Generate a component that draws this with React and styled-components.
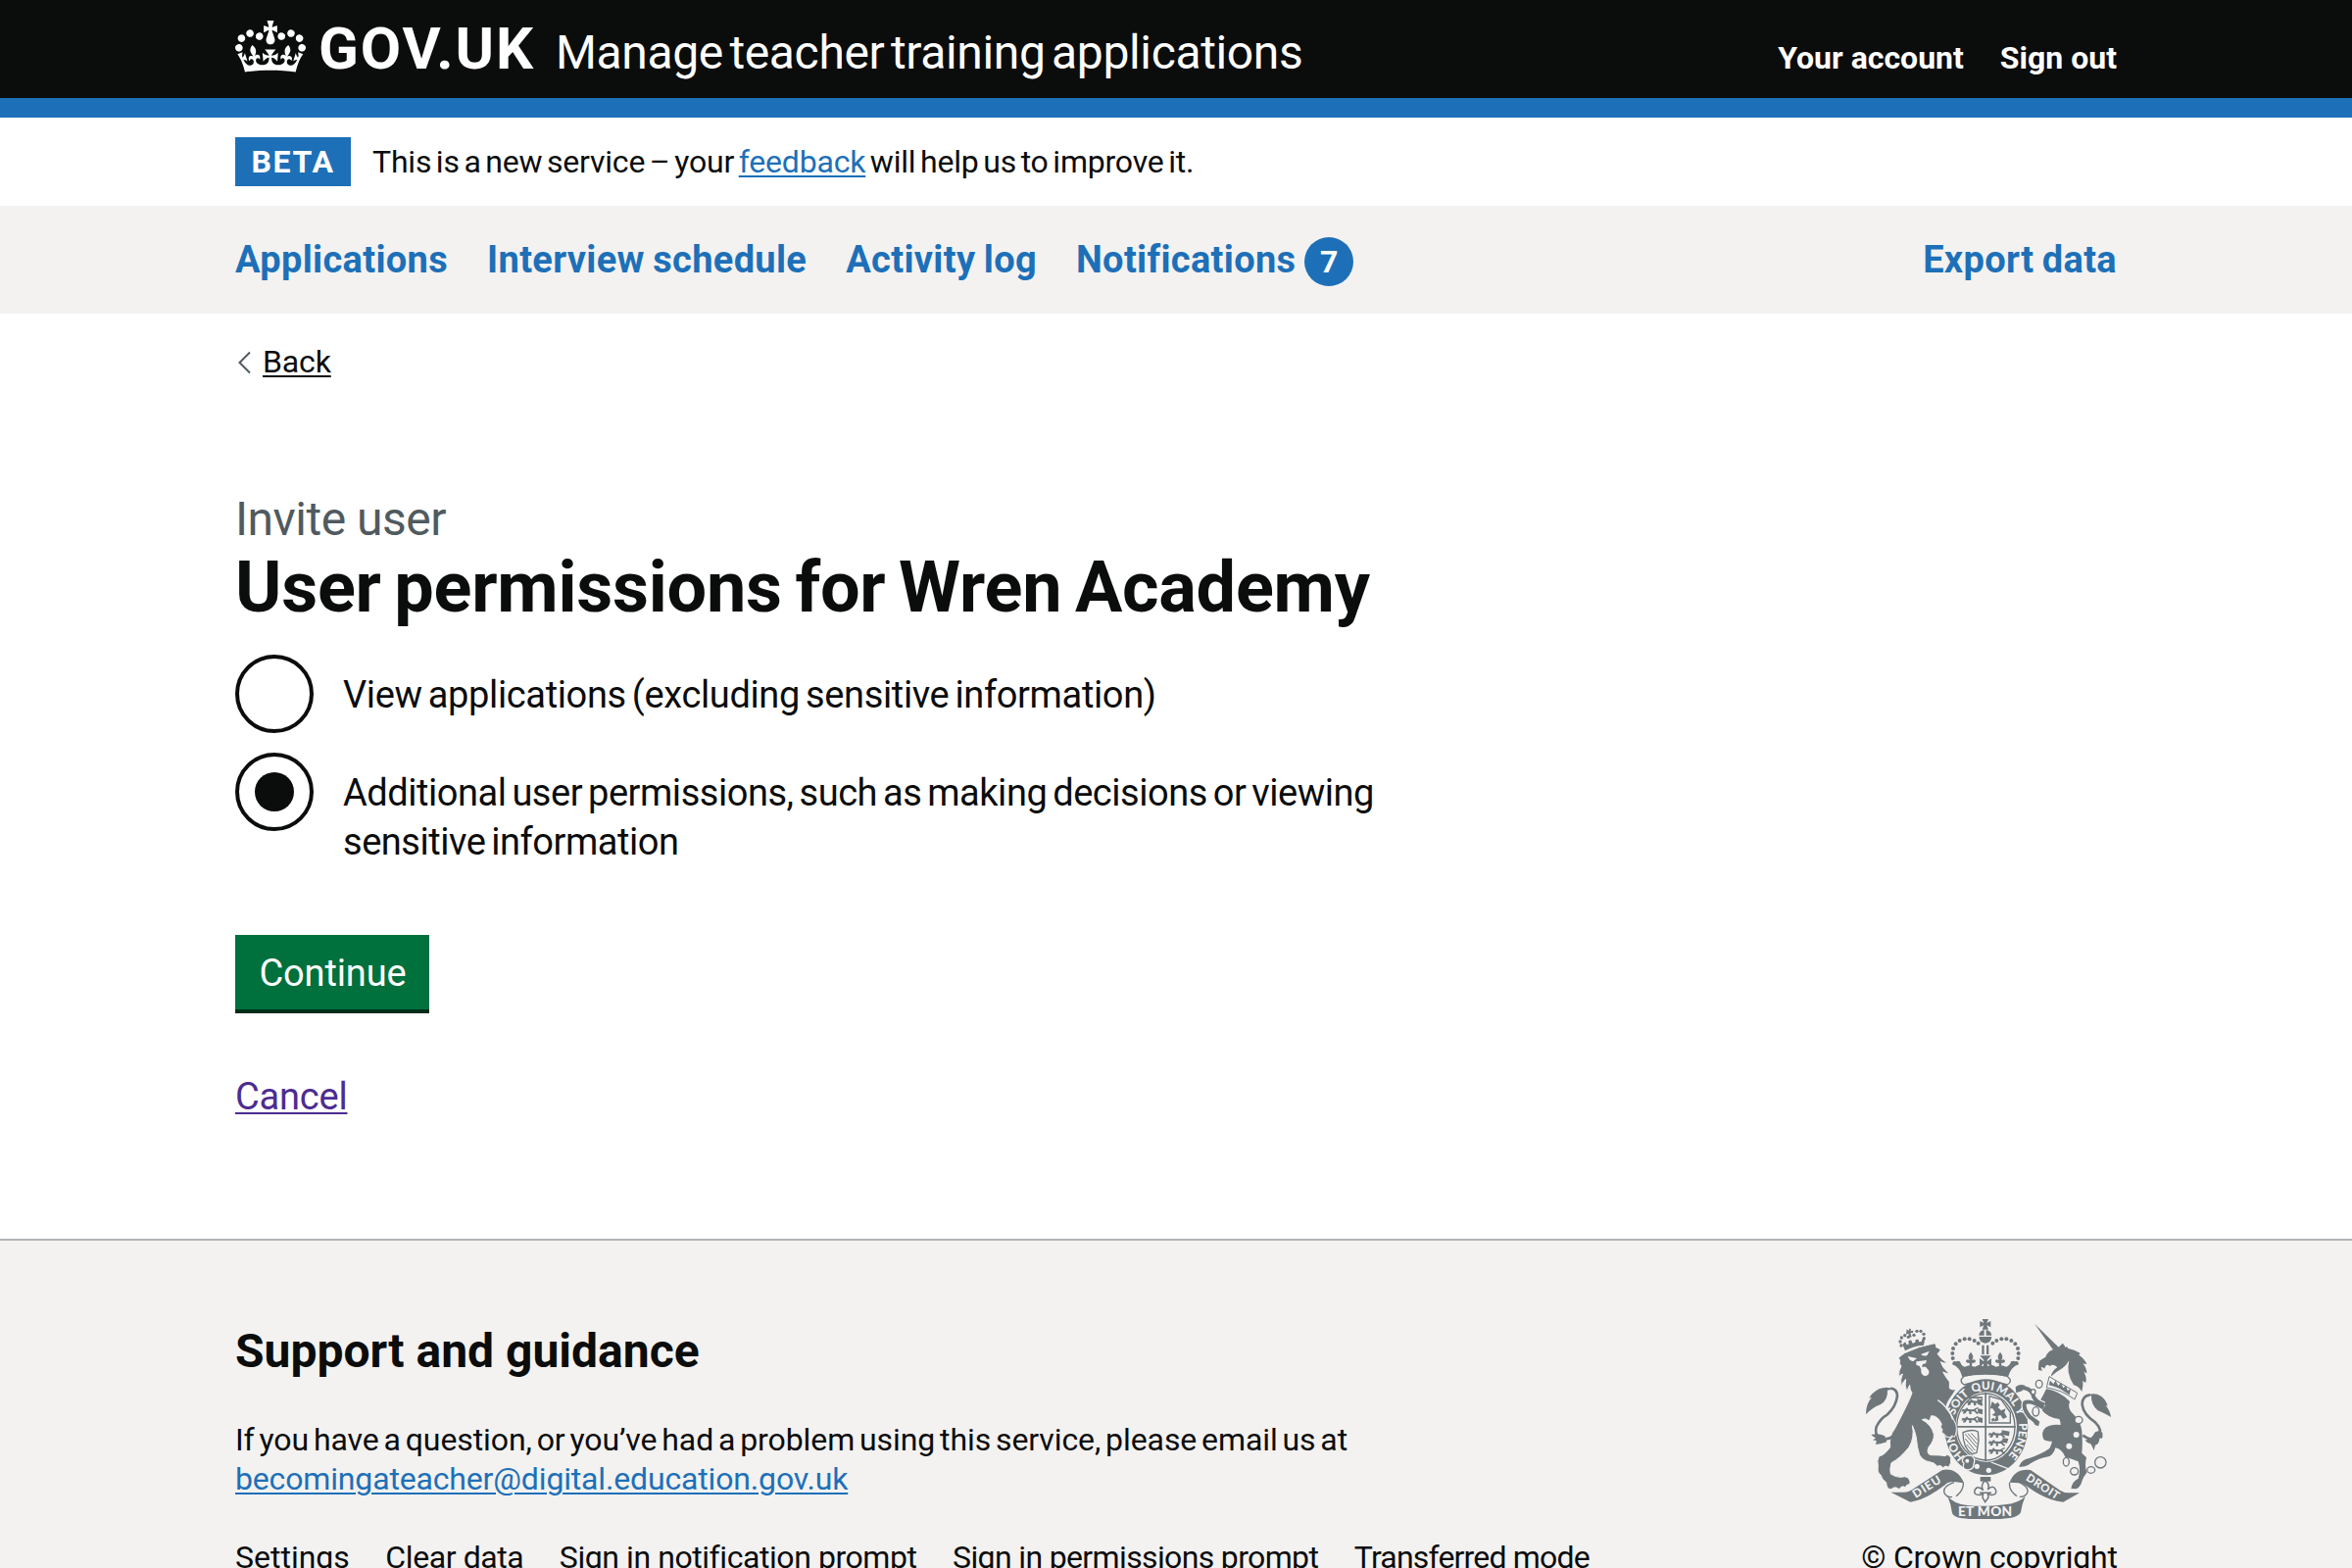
import React, { useState } from 'react';
import styled, { createGlobalStyle, ThemeProvider } from 'styled-components';

const theme = {
  ink: '#0b0c0c',
  blue: '#1d70b8',
  grey: '#f3f2f1',
  border: '#b1b4b6',
  secondary: '#505a5f',
  visited: '#4c2c92',
  green: '#00703c',
  greenShade: '#002d18',
  crest: '#6f777b',
};

const GlobalStyle = createGlobalStyle`
  html, body { margin: 0; padding: 0; background: #fff; }
  body {
    font-family: Roboto, "Liberation Sans", sans-serif;
    color: ${theme.ink};
    overflow: hidden;
  }
`;

const Page = styled.div`
  height: 1600px;
  overflow: hidden;
`;

const Container = styled.div`
  width: 1920px;
  margin: 0 auto;
`;

const Text = styled.span`
  letter-spacing: ${(p) => p.$track || 0}px;
`;

/* Header */

const Header = styled.header`
  height: 100px;
  background: ${(p) => p.theme.ink};
  color: #fff;
  border-bottom: 20px solid ${(p) => p.theme.blue};
`;

const HeaderRow = styled(Container)`
  display: flex;
  align-items: flex-start;
`;

const CrownIcon = styled.svg`
  display: block;
  width: 72px;
  height: 53px;
  margin: 21px 13px 0 0;
  fill: #fff;
`;

const Logotype = styled.span`
  width: 242px;
  margin-top: 20px;
  font-size: 60px;
  line-height: 60px;
  font-weight: 700;
  letter-spacing: 1.92px;
  white-space: nowrap;
`;

const ServiceName = styled.span`
  margin-top: 24px;
  font-size: 48px;
  line-height: 60px;
  letter-spacing: -0.36px;
  word-spacing: -5px;
  white-space: nowrap;
`;

const AccountNav = styled.nav`
  display: flex;
  gap: 37px;
  margin: 39px 0 0 auto;
  font-size: 32px;
  line-height: 40px;
  font-weight: 700;
`;

/* Phase banner */

const PhaseBanner = styled(Container)`
  display: flex;
  align-items: center;
  gap: 22px;
  height: 90px;
  font-size: 32px;
  line-height: 40px;
`;

const PhaseTag = styled.strong`
  box-sizing: border-box;
  width: 118px;
  height: 50px;
  background: ${(p) => p.theme.blue};
  color: #fff;
  line-height: 50px;
  letter-spacing: 1.7px;
  text-align: center;
`;

const BannerText = styled.span`
  letter-spacing: -0.2px;
  word-spacing: -3.1px;
`;

const Link = styled.a`
  color: ${(p) => p.theme[p.$tone || 'blue']};
  text-decoration: underline;
  text-decoration-thickness: 2px;
  text-underline-offset: 3px;
`;

/* Primary navigation */

const NavBar = styled.nav`
  height: 110px;
  background: ${(p) => p.theme.grey};
`;

const NavRow = styled(Container)`
  display: flex;
  gap: 40px;
  padding-top: 30px;
`;

const NavItem = styled.a`
  display: flex;
  color: ${(p) => p.theme.blue};
  font-size: 38px;
  line-height: 50px;
  font-weight: 700;
  letter-spacing: 0.33px;
  word-spacing: -1.4px;
  white-space: nowrap;
  margin-left: ${(p) => (p.$end ? 'auto' : 0)};
`;

const Badge = styled.span`
  width: 50px;
  height: 50px;
  margin: 2px 0 0 9px;
  border-radius: 50%;
  background: ${(p) => p.theme.blue};
  color: #fff;
  font-size: 32px;
  text-align: center;
`;

/* Main */

const Main = styled(Container)`
  height: 944px;
`;

const BackLink = styled.div`
  display: flex;
  align-items: center;
  padding: 29px 0 111px 3px;
  font-size: 32px;
  line-height: 40px;
  letter-spacing: -0.15px;
`;

const Chevron = styled.svg`
  width: 13px;
  height: 24px;
  margin: 1px 12px 0 0;
  fill: none;
  stroke: ${(p) => p.theme.secondary};
  stroke-width: 2;
`;

const Caption = styled.span`
  display: block;
  color: ${(p) => p.theme.secondary};
  font-size: 48px;
  line-height: 60px;
  letter-spacing: -0.5px;
`;

const Title = styled.h1`
  margin: 0 0 28px;
  font-size: 72px;
  line-height: 80px;
  font-weight: 700;
  letter-spacing: -0.25px;
  word-spacing: -4px;
`;

const RadioGroup = styled.div`
  display: flex;
  flex-direction: column;
  gap: 20px;
  width: 1190px;
`;

const RadioRow = styled.label`
  display: flex;
  gap: 30px;
  min-height: 80px;
`;

const RadioInput = styled.input`
  appearance: none;
  flex: none;
  display: grid;
  place-items: center;
  box-sizing: border-box;
  width: 80px;
  height: 80px;
  margin: 0;
  border: 4px solid ${(p) => p.theme.ink};
  border-radius: 50%;

  &:checked::after {
    content: '';
    width: 40px;
    height: 40px;
    border-radius: 50%;
    background: ${(p) => p.theme.ink};
  }
`;

const RadioLabel = styled.span`
  padding-top: 16px;
  font-size: 38px;
  line-height: 50px;
  letter-spacing: ${(p) => p.$track}px;
  word-spacing: -3px;
`;

const Button = styled.button`
  display: block;
  width: 198px;
  height: 76px;
  margin: 70px 0 64px;
  padding: 0 0 0 1px;
  border: 0;
  background: ${(p) => p.theme.green};
  box-shadow: 0 4px 0 ${(p) => p.theme.greenShade};
  color: #fff;
  font: inherit;
  font-size: 38px;
  line-height: 78px;
  letter-spacing: -0.14px;
`;

const CancelRow = styled.div`
  font-size: 38px;
  line-height: 50px;
  letter-spacing: -0.2px;
`;

/* Footer */

const Footer = styled.footer`
  height: 400px;
  border-top: 2px solid ${(p) => p.theme.border};
  background: ${(p) => p.theme.grey};
`;

const FooterRow = styled(Container)`
  display: flex;
  justify-content: space-between;
`;

const FooterMain = styled.div`
  padding-top: 83px;
  font-size: 32px;
  line-height: 40px;
`;

const FooterTitle = styled.h2`
  margin: 0 0 40px;
  font-size: 48px;
  line-height: 60px;
  font-weight: 700;
`;

const FooterText = styled.p`
  margin: 0 0 40px;
  letter-spacing: -0.08px;
  word-spacing: -3px;
`;

const FooterLinks = styled.div`
  display: flex;
  gap: 36.5px;
  white-space: nowrap;
`;

const FooterMeta = styled.div`
  display: flex;
  flex-direction: column;
  align-items: center;
  width: 260px;
  padding-top: 80px;
  font-size: 32px;
  line-height: 40px;
  letter-spacing: -0.2px;
  white-space: nowrap;
`;

const CrestSvg = styled.svg`
  display: block;
  width: 250px;
  height: 204px;
  margin: 0 2px 19px 0;
  color: ${(p) => p.theme.crest};
`;

const Crown = () => (
  <CrownIcon viewBox="0 0 132 97" aria-hidden="true">
    <path
      fillRule="evenodd"
      d="M25 30.2c3.5 1.5 7.7-.2 9.1-3.7 1.5-3.6-.2-7.8-3.9-9.2-3.6-1.4-7.6.3-9.1 3.9-1.4 3.5.3 7.5 3.9 9zM9 39.5c3.6 1.5 7.8-.2 9.2-3.7 1.5-3.6-.2-7.8-3.9-9.1-3.6-1.5-7.6.2-9.1 3.8-1.4 3.5.3 7.5 3.8 9zM4.4 57.2c3.5 1.5 7.7-.2 9.1-3.8 1.5-3.6-.2-7.7-3.9-9.1-3.5-1.5-7.6.3-9.1 3.8-1.4 3.5.3 7.6 3.9 9.1zm38.3-21.4c3.5 1.5 7.7-.2 9.1-3.8 1.5-3.6-.2-7.7-3.9-9.1-3.6-1.5-7.6.3-9.1 3.8-1.3 3.6.4 7.7 3.9 9.1zm64.4-5.6c-3.6 1.5-7.8-.2-9.1-3.7-1.5-3.6.2-7.8 3.8-9.2 3.6-1.4 7.7.3 9.2 3.9 1.3 3.5-.4 7.5-3.9 9zm15.9 9.3c-3.6 1.5-7.7-.2-9.1-3.7-1.5-3.6.2-7.8 3.7-9.1 3.6-1.5 7.7.2 9.2 3.8 1.5 3.5-.3 7.5-3.8 9zm4.7 17.7c-3.6 1.5-7.8-.2-9.2-3.8-1.5-3.6.2-7.7 3.9-9.1 3.6-1.5 7.7.3 9.2 3.8 1.3 3.5-.4 7.6-3.9 9.1zM89.3 35.8c-3.6 1.5-7.8-.2-9.2-3.8-1.4-3.6.2-7.7 3.9-9.1 3.6-1.5 7.7.3 9.2 3.8 1.4 3.6-.3 7.7-3.9 9.1zM69.7 17.7l8.9 4.7V9.3l-8.9 2.8c-.2-.3-.5-.6-.9-.9L72.4 0H59.6l3.5 11.2c-.3.3-.6.5-.9.9l-8.8-2.8v13.1l8.8-4.7c.3.3.6.7.9.9l-5 15.4v.1c-.2.8-.4 1.6-.4 2.4 0 4.1 3.1 7.5 7 8.1h.2c.3 0 .7.1 1 .1.4 0 .7 0 1-.1h.2c4-.6 7.1-4.1 7.1-8.1 0-.8-.1-1.7-.4-2.4V34l-5.1-15.4c.4-.2.7-.6 1-.9zM66 92.8c16.9 0 32.8 1.1 47.1 3.2 4-16.9 8.9-26.7 14-33.5l-9.6-3.4c1 4.9 1.1 7.2 0 10.2-1.5-1.4-3-4.3-4.2-8.7L108.6 76c2.8-2 5-3.2 7.5-3.3-4.4 9.4-10 11.9-13.6 11.2-4.3-.8-6.3-4.6-5.6-7.9 1-4.7 5.7-5.9 8-.5 4.3-8.7-3-11.4-7.6-8.8 7.1-7.2 7.9-13.5 2.1-21.1-8 6.1-8.1 12.3-4.5 20.8-4.7-5.4-12.1-2.5-9.5 6.2 3.4-5.2 7.9-2 7.2 3.1-.6 4.3-6.4 7.8-13.5 7.2-10.3-.9-10.9-8-11.2-13.8 2.5-.5 7.1 1.8 11 7.3L80.2 60c-4.1 4.4-8 5.3-12.3 5.4 1.4-4.4 8-11.6 8-11.6H55.5s6.4 7.2 7.9 11.6c-4.2-.1-8-1-12.3-5.4l1.4 16.4c3.9-5.5 8.5-7.7 10.9-7.3-.3 5.8-.9 12.8-11.1 13.8-7.2.6-12.9-2.9-13.5-7.2-.7-5 3.8-8.3 7.1-3.1 2.7-8.7-4.6-11.6-9.4-6.2 3.7-8.5 3.6-14.7-4.6-20.8-5.8 7.6-5 13.9 2.2 21.1-4.7-2.6-11.9.1-7.7 8.8 2.3-5.5 7.1-4.2 8.1.5.7 3.3-1.3 7.1-5.7 7.9-3.5.7-9-1.8-13.5-11.2 2.5.1 4.7 1.3 7.5 3.3l-4.7-15.4c-1.2 4.4-2.7 7.2-4.3 8.7-1.1-3-.9-5.3 0-10.2l-9.5 3.4c5 6.9 9.9 16.7 14 33.5 14.8-2.1 30.8-3.2 47.7-3.2z"
    />
  </CrownIcon>
);

const crownPearls = [
  [343, 213], [338, 198], [337, 183], [339, 168], [347, 154], [359, 144], [374, 139], [389, 139], [404, 144],
];

const lionPearls = [
  [180, 159], [177, 147], [181, 135], [191, 128], [219, 127], [228, 115], [240, 115], [249, 124], [250, 137], [202, 133],
];

const chainLinks = [
  [602, 277, 10, 12], [584, 301, 7, 8], [592, 361, 10, 14], [723, 387, 12, 11],
  [685, 515, 9, 13], [710, 544, 12, 11], [761, 540, 12, 10], [790, 517, 17, 17],
];

const motto = [
  ['HON', 112], ['SOIT', 247], ['QUI', 331], ['MAL', 407], ['Y', 464], ['PENSE', 552],
];

const Passant = ({ x, y }) => (
  <path
    transform={`translate(${x} ${y})`}
    d="M0 14l4-9 7 2 6-6 5 5 14 1 9-5 7-3-1 5-7 3 3 6 6 5-6 3-7-8-10 0 2 7-8 1 0-8-7-2-4 8-8 1 2-8z"
  />
);

const CrownFleur = ({ x }) => (
  <path
    transform={`translate(${x} 196)`}
    d="M0-17q13 15 3 25 10-6 12 2 0 8-11 6l-1 12h-6l-1-12q-11 2-11-6 2-8 12-2-10-10 3-25z"
  />
);

const Crest = () => (
  <CrestSvg viewBox="72 78 750 612" role="img" aria-label="Royal coat of arms">
    <defs>
      <path id="garter" d="M440 526A101 116 0 0 1 440 294A101 116 0 0 1 440 526" />
    </defs>
    <g fill="currentColor">
      {/* royal crown */}
      <path d="M428 78h19l-5 12 12-6v19l-12-6 5 13h-19l5-13-12 6V84l12 6z" />
      <path d="M418 128q0-13 16-17v17zM440 111q16 4 17 17h-17zM418 132h39q-2 19-19 20-18-1-20-20z" />
      <path d="M427 158h7v28h-7zM441 158h7v28h-7z" />
      {crownPearls.map(([x, y]) => (
        <g key={`${x}-${y}`}>
          <circle cx={x} cy={y} r="6" />
          <circle cx={876 - x} cy={y} r="6" />
        </g>
      ))}
      <circle cx="416" cy="152" r="6" />
      <circle cx="460" cy="152" r="6" />
      <CrownFleur x={393} />
      <CrownFleur x={483} />
      <path d="M421 190h34l-12 13v5l13-10v26l-13-10 3 14h-16l3-14-13 10v-26l13 10v-5z" />
      <path d="M336 216q14-14 24-8 4 14 14 16l14-4 18 4 12-6 20 6 20-6 12 6 18-4 14 4q12-4 14-16 12-6 24 8-24 8-33 39-73-14-140 0-7-30-31-39z" />
      <path d="M373 252q64-16 131 0l9 10q4 10-8 17-65-22-132 0-12-7-9-17z" fill="none" stroke="currentColor" strokeWidth="4" />

      {/* garter and shield */}
      <path fillRule="evenodd" d="M440 262A128 147 0 0 1 440 556A128 147 0 0 1 440 262zM440 301A94 107 0 0 0 440 515A94 107 0 0 0 440 301z" />
      <ellipse cx="439" cy="408" rx="89" ry="102" fill="none" stroke="currentColor" strokeWidth="4" />
      <path d="M436 303h5v210h-5zM348 405h182v5H348z" />
      <Passant x={378} y={322} />
      <Passant x={364} y={348} />
      <Passant x={364} y={375} />
      <path d="M385 316h44v5h-44zM412 322l16 4v18l-14-6zM414 352l15 2v16l-14-4zM414 378l15 2v16l-14-4z" />
      <Passant x={446} y={421} />
      <Passant x={446} y={446} />
      <Passant x={446} y={471} />
      <path d="M488 418l24 4-2 14-22-4zM490 442l18 2-4 14-14-3z" />
      <path d="M450 314l36 10 28 40v32h-64z" fill="none" stroke="currentColor" strokeWidth="4" />
      <path d="M458 330l10 8 8-6 6 10-6 6 10 10 14-6-4 12 8 14-12 6-8-12-8 2 2 14-12 4 4-16-12-4 10-8-8-12-8 0zM456 384l8-4 4 8-10 4z" />
      <path d="M369 425q30-12 46-2l2 26-6 38-14 4q-28-18-28-66z" fill="none" stroke="currentColor" strokeWidth="4" />
      <path d="M376 430l34 40M376 444l30 36M384 428l28 32M394 427l20 22M380 462l20 22" stroke="currentColor" strokeWidth="3" />
      <path d="M372 500q-10 12 0 20-8 18 12 20 18-2 18-18 6-16-4-24-12-6-26 2z" stroke="#f3f2f1" strokeWidth="4" />
      <circle cx="382" cy="512" r="6" fill="#f3f2f1" />
      <circle cx="412" cy="529" r="8" fill="#f3f2f1" />
      <circle cx="448" cy="541" r="8" fill="#f3f2f1" />
      <path d="M455 516l58 22" stroke="#f3f2f1" strokeWidth="4" />
      <g fill="#f3f2f1" fontFamily="Lato, sans-serif" fontWeight="900" fontSize="35" textAnchor="middle">
        {motto.map(([word, offset]) => (
          <text key={word}>
            <textPath href="#garter" startOffset={offset}>{word}</textPath>
          </text>
        ))}
      </g>

      {/* lion */}
      {lionPearls.map(([x, y]) => (
        <circle key={`${x}-${y}`} cx={x} cy={y} r="5" />
      ))}
      <path d="M197 109l6 5 2-7 5 1-1 7 8-2-1 7-8 1 4 12-7 2-3-13-7 3zM184 155l9-7 3 8 7-1-1-10 8-3 5 10 8-3 1-8 9-1 1 8 8-1 3-9 7 4-3 16q-32 2-57 17z" />
      <path
        stroke="#f3f2f1"
        strokeWidth="3"
        d="M172 196Q182 188 190 182Q235 160 283 152Q288 158 287 164Q300 168 300 173Q296 182 291 184Q300 200 322 213Q308 214 301 209Q306 228 327 244Q316 245 308 240Q316 256 328 270L328 290Q336 296 348 293Q336 312 326 326Q318 338 318 352Q338 372 348 402Q352 425 342 440Q336 430 330 440Q318 442 312 430Q302 428 306 416Q296 408 304 400Q298 386 290 380Q284 374 272 374Q270 384 264 390Q258 380 244 386Q272 400 280 430Q282 450 264 470Q256 490 270 494Q300 494 315 497Q322 488 332 502Q335 520 325 532Q316 524 308 533Q300 522 290 529Q284 518 270 516Q246 512 236 494Q228 470 226 440Q222 420 214 404Q222 440 204 470Q176 505 150 518Q144 538 148 552Q170 566 190 560Q209 562 207 584Q198 582 192 593Q182 586 174 599Q160 588 150 599Q135 600 134 578Q119 568 118 556Q105 548 109 528Q105 510 112 498Q130 494 146 470Q142 436 160 414Q205 330 213 304Q206 296 206 280Q200 290 198 302Q189 280 194 262Q186 270 180 284Q176 262 184 246Q177 250 173 254Q171 236 180 222Q172 214 176 206Z"
      />
      <path d="M292 326q36 24 46 60" fill="none" stroke="#f3f2f1" strokeWidth="4" />
      <path d="M200 192l28 6-10 8q-10 4-18-14zM240 186l26-10-6 12q-8 6-20-2zM226 208l32-4-3 10-9 2-3 8 12 0 10 12q2 16-14 16-12-4-10-20l-5-10-10-4z" fill="#f3f2f1" />
      <path d="M182 408q-24 36-52 38-34-4-26-38 12-26 34-38 26-24 30-56 0-22-20-24" fill="none" stroke="currentColor" strokeWidth="8" />
      <path d="M158 292q-24-10-46 0-22 12-30 28l8-2q-18 18-18 52 18-20 44-30 24-14 22-44zM130 436q-20-10-42-4 8 8 14 10-6 6-10 6 8 2 12 2 0 6-2 12 18-2 34-8z" />

      {/* unicorn */}
      <path d="M588 92l74 72-13 14z" />
      <path d="M600 234Q600 212 603 206Q614 198 622 194Q630 172 652 170Q664 164 674 152Q680 156 682 164Q690 160 691 168Q710 172 728 182L724 188Q742 200 748 216Q740 216 736 214Q748 228 748 244Q742 242 738 238Q750 258 745 272Q740 272 736 266Q738 282 733 300Q722 282 708 280Q696 262 692 240Q690 220 694 205Q684 222 674 228Q656 238 638 254Q642 236 658 226Q652 217 642 218L634 222Q628 214 622 222L618 230Q612 222 608 226L612 236Z" />
      <path d="M633 254l86 50-8 20q-40-30-86-36z" fill="#f3f2f1" stroke="currentColor" strokeWidth="3" />
      <path d="M632 280l4-14 10 11 6-11 9 16 8-9 7 16 9-7 4 15 10-5-4 18-12-8q-24-16-51-22z" />
      <path
        d="M624 292Q665 298 696 330Q688 352 706 368Q730 390 733 420Q736 460 733 488L747 502Q741 524 748 548Q738 560 734 572Q730 590 716 598L700 597Q704 574 722 566Q730 540 722 514Q700 505 682 500Q672 476 652 472Q648 490 634 498Q600 504 576 520Q562 532 540 530Q548 508 572 504Q612 490 634 474Q640 462 642 452Q624 452 616 446Q606 424 622 410Q640 398 668 402Q668 392 664 384Q630 382 606 352Q600 340 604 330Q616 310 624 292z"
      />
      <g fill="none" strokeLinejoin="round">
        <path d="M618 340Q586 330 582 306Q572 286 536 290M616 350Q576 324 558 334Q552 350 572 376L596 394" stroke="#f3f2f1" strokeWidth="19" />
        <path d="M618 340Q586 330 582 306Q572 286 540 288M616 350Q576 324 558 334Q552 350 572 376L596 394" stroke="currentColor" strokeWidth="12" />
      </g>
      <path d="M530 286q14-12 30-4l-10 16-18 6zM578 384l14 0 12 8-4 14-10-4z" />
      <circle cx="716" cy="432" r="9" fill="#f3f2f1" />
      <circle cx="694" cy="467" r="9" fill="#f3f2f1" />
      {chainLinks.map(([x, y, rx, ry]) => (
        <ellipse key={`${x}-${y}`} cx={x} cy={y} rx={rx} ry={ry} fill="#f3f2f1" stroke="currentColor" strokeWidth="4" />
      ))}
      <path d="M736 434q34 24 50 4 10-22-12-44-36-24-40-54 0-28 24-30" fill="none" stroke="currentColor" strokeWidth="8" />
      <path d="M744 314q24-14 48 0 16 12 20 30l-6-2q14 18 16 36-24-14-40-20-22-18-20-46zM774 424q14-8 22 2 2 12-2 18l-6-2q-2 12-6 18l-8 4q-2 8-4 16-6-14-10-20-12-2-18-12 18 2 32-24z" />

      {/* scrolls */}
      <path d="M148 608h36q14 2 26-6l96-62q46-8 66 40l-30-4q-20 0-28 10-60 46-106 52z" />
      <path d="M726 610h-34q-14 0-26-8l-90-62q-48-6-64 38l30 2q12 0 20 8 62 46 114 50z" />
      <path d="M370 578q2 24-22 42M342 578q-36 12-30 32 8 16 24 12M512 578q-4 24 22 42M542 578q30 14 24 32-8 14-24 12" fill="none" stroke="currentColor" strokeWidth="4" />
      <path d="M322 620q20 24 60 28 56 6 116-2 44-6 62-26-10 22-14 50-6 14-40 18-70 8-140 0-26-4-30-16-4-30-14-52z" />
      <g fill="#f3f2f1" fontFamily="Lato, sans-serif" fontWeight="900" textAnchor="middle">
        <text x="0" y="0" fontSize="36" letterSpacing="3" transform="translate(266 601) rotate(-32)">DIEU</text>
        <text x="0" y="0" fontSize="34" letterSpacing="2" transform="translate(608 601) rotate(33)">DROIT</text>
        <text x="437" y="681" fontSize="41" letterSpacing="1">ET MON</text>
      </g>
      <path d="M422 561h32v14h-32z" />
      <path d="M437 572q-16 14-6 30-18-18-26 0-4 16 18 14l8-4-2 12 8 14 10-14-2-12 8 4q22 2 16-16-8-16-24 0 8-16-8-28zM420 610h36" fill="none" stroke="currentColor" strokeWidth="4.5" />
    </g>
  </CrestSvg>
);

const navItems = [
  { label: 'Applications' },
  { label: 'Interview schedule' },
  { label: 'Activity log' },
  { label: 'Notifications', count: 7 },
];

const options = [
  { value: 'view', label: 'View applications (excluding sensitive information)', track: -0.36 },
  {
    value: 'additional',
    label: 'Additional user permissions, such as making decisions or viewing sensitive information',
    track: -0.47,
  },
];

const footerLinks = [
  ['Settings', 0],
  ['Clear data', -0.41],
  ['Sign in notification prompt', -0.43],
  ['Sign in permissions prompt', -0.64],
  ['Transferred mode', -0.81],
];

export default function App() {
  const [choice, setChoice] = useState('additional');

  return (
    <ThemeProvider theme={theme}>
      <GlobalStyle />
      <Page>
        <Header>
          <HeaderRow>
            <Crown />
            <Logotype>GOV.UK</Logotype>
            <ServiceName>Manage teacher training applications</ServiceName>
            <AccountNav>
              <span>Your account</span>
              <span>Sign out</span>
            </AccountNav>
          </HeaderRow>
        </Header>

        <PhaseBanner>
          <PhaseTag>BETA</PhaseTag>
          <BannerText>
            This is a new service – your <Link>feedback</Link> will help us to improve it.
          </BannerText>
        </PhaseBanner>

        <NavBar>
          <NavRow>
            {navItems.map(({ label, count }) => (
              <NavItem key={label}>
                {label}
                {count && <Badge>{count}</Badge>}
              </NavItem>
            ))}
            <NavItem $end>Export data</NavItem>
          </NavRow>
        </NavBar>

        <Main as="main">
          <BackLink>
            <Chevron viewBox="0 0 13 24">
              <path d="M12 1.5L1.5 12 12 22.5" />
            </Chevron>
            <Link $tone="ink">Back</Link>
          </BackLink>

          <Caption>Invite user</Caption>
          <Title>User permissions for Wren Academy</Title>

          <RadioGroup role="radiogroup">
            {options.map(({ value, label, track }) => (
              <RadioRow key={value}>
                <RadioInput
                  type="radio"
                  name="permissions"
                  checked={choice === value}
                  onChange={() => setChoice(value)}
                />
                <RadioLabel $track={track}>{label}</RadioLabel>
              </RadioRow>
            ))}
          </RadioGroup>

          <Button type="button">Continue</Button>
          <CancelRow>
            <Link $tone="visited">Cancel</Link>
          </CancelRow>
        </Main>

        <Footer>
          <FooterRow>
            <FooterMain>
              <FooterTitle>Support and guidance</FooterTitle>
              <FooterText>
                If you have a question, or you’ve had a problem using this service, please email us at
                <br />
                <Link>
                  <Text $track={-0.16}>becomingateacher@digital.education.gov.uk</Text>
                </Link>
              </FooterText>
              <FooterLinks>
                {footerLinks.map(([label, track]) => (
                  <Text key={label} $track={track}>{label}</Text>
                ))}
              </FooterLinks>
            </FooterMain>
            <FooterMeta>
              <Crest />
              <span>© Crown copyright</span>
            </FooterMeta>
          </FooterRow>
        </Footer>
      </Page>
    </ThemeProvider>
  );
}
